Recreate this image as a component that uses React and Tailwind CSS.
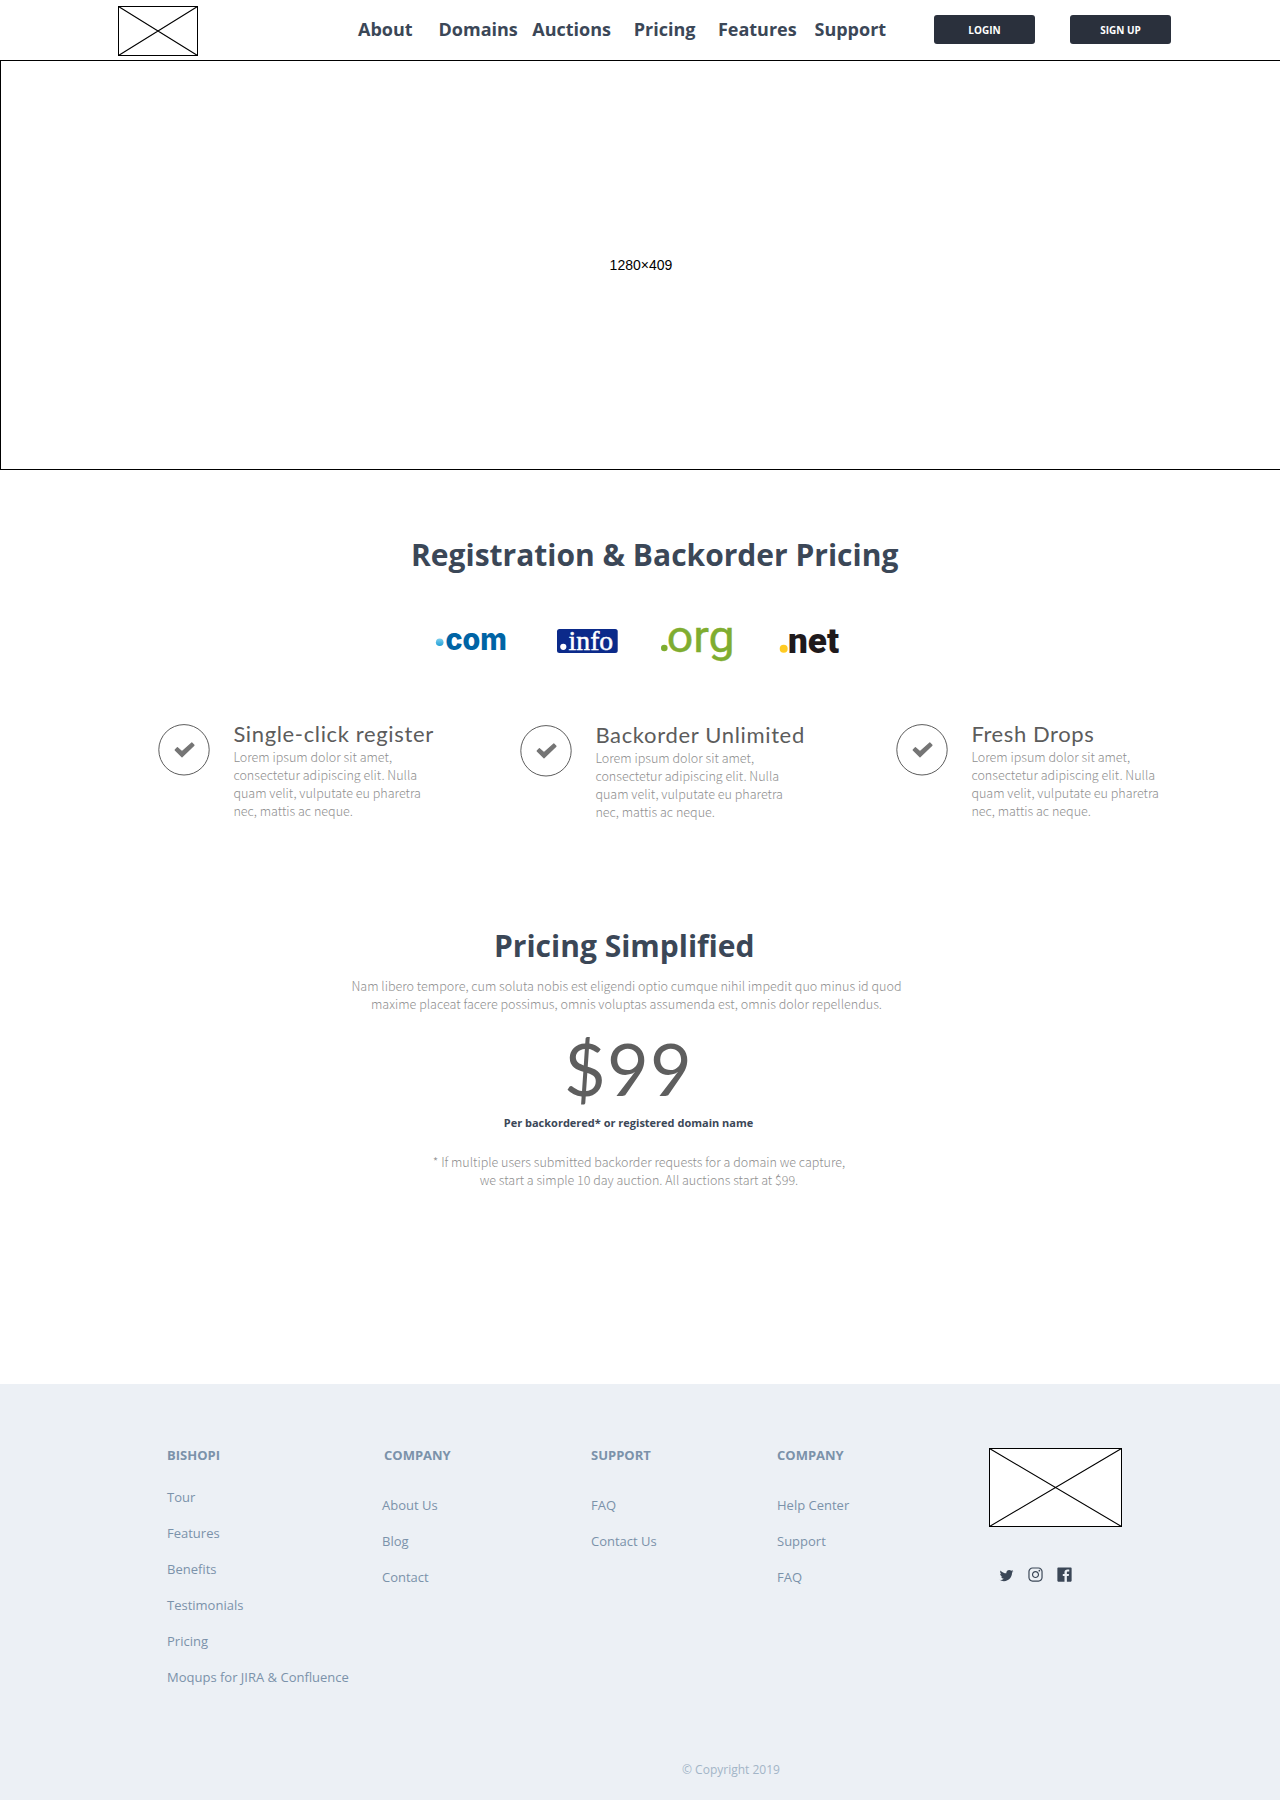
import React from "react";
import { IoLogoTwitter, IoLogoInstagram, IoLogoFacebook } from "react-icons/io";

function ImagePlaceholder({ width, height, className }) {
  return (
    <svg width={width} height={height} className={className} aria-hidden="true">
      <rect x="0.5" y="0.5" width={width - 1} height={height - 1} fill="#fff" stroke="#000" />
      <path d={`M0.5 0.5L${width - 0.5} ${height - 0.5}M${width - 0.5} 0.5L0.5 ${height - 0.5}`} stroke="#000" strokeWidth="1.1" />
    </svg>
  );
}

function Header() {
  return (
    <header className="flex h-[60px] pl-[118px]">
      <ImagePlaceholder width={80} height={50} className="mt-[6px] shrink-0" />
      <nav className="mt-[17px] ml-[160px] flex text-[18px] leading-[24px] font-bold whitespace-nowrap text-[#3b4757]">
        <a className="w-[80.5px]">About</a>
        <a className="w-[93.8px]">Domains</a>
        <a className="w-[101.4px]">Auctions</a>
        <a className="w-[84.2px]">Pricing</a>
        <a className="w-[96.6px]">Features</a>
        <a className="w-[119.5px]">Support</a>
      </nav>
      <div className="mt-[15px] flex gap-[35px] text-[10px] font-bold text-white">
        <button className="h-[29px] w-[101px] rounded-[3px] bg-[#2a303c] pt-px leading-[14px]">LOGIN</button>
        <button className="h-[29px] w-[101px] rounded-[3px] bg-[#2a303c] pt-px leading-[14px]">SIGN UP</button>
      </div>
    </header>
  );
}

function Hero() {
  return (
    <section className="h-[410px] border-y border-l border-black pt-[196px] pl-[608.6px] font-['Liberation_Sans',sans-serif] text-[14px] leading-[16px] text-black">
      1280×409
    </section>
  );
}

function Logos() {
  return (
    <div className="mt-[25px] ml-[435px] flex h-[75px] items-start">
      <svg width="72" height="75" viewBox="0 -20 72 75" className="mr-[50px] overflow-visible" aria-label=".com">
        <defs>
          <linearGradient id="comDot" x1="0" y1="0" x2="0" y2="1">
            <stop offset="0" stopColor="#7fd0ee" />
            <stop offset="1" stopColor="#1f9ed6" />
          </linearGradient>
        </defs>
        <circle cx="4.7" cy="22.3" r="3.8" fill="url(#comDot)" />
        <text x="10.4" y="30.2" textLength="61.5" lengthAdjust="spacingAndGlyphs" className="fill-[#0064a5] font-['Inter',sans-serif] text-[30px] font-extrabold">com</text>
      </svg>
      <svg width="61" height="75" viewBox="0 -20 61 75" className="mr-[42px] overflow-visible" aria-label=".info">
        <rect x="0" y="9" width="60.7" height="24" rx="2.5" fill="#0b2a8a" />
        <circle cx="6.3" cy="26.8" r="3.1" fill="#fff" />
        <text x="11.6" y="30.2" textLength="44.6" lengthAdjust="spacingAndGlyphs" stroke="#fff" strokeWidth="0.5" className="fill-white font-['Liberation_Serif',serif] text-[28px]">info</text>
      </svg>
      <svg width="76" height="75" viewBox="0 -20 76 75" className="mr-[42px] overflow-visible" aria-label=".org">
        <circle cx="4.3" cy="28" r="3.3" fill="#7fad30" />
        <text x="6.7" y="31.5" textLength="68" lengthAdjust="spacingAndGlyphs" stroke="#7fad30" strokeWidth="0.4" className="fill-[#7fad30] font-['Roboto',sans-serif] text-[45px]">org</text>
      </svg>
      <svg width="64" height="75" viewBox="0 -20 64 75" className="overflow-visible" aria-label=".net">
        <circle cx="5.7" cy="28.7" r="4" fill="#ffcb22" />
        <text x="10" y="32.8" textLength="51" lengthAdjust="spacingAndGlyphs" className="fill-[#1f1a1c] font-['Roboto',sans-serif] text-[35.5px] font-black">net</text>
      </svg>
    </div>
  );
}

function Feature({ title, className, titleClass }) {
  return (
    <article className={"flex items-start " + className}>
      <svg width="52" height="52" className="shrink-0" aria-hidden="true">
        <circle cx="26" cy="25.8" r="25.2" fill="none" stroke="#5c5c5c" />
        <path d="M24 27.6L33.8 19L36 21.2L24 32.8L17.2 26L19.4 23.6Z" fill="#757575" stroke="#757575" strokeWidth="1.2" strokeLinejoin="round" />
      </svg>
      <div className="-mt-[4px] ml-[23.4px]">
        <h3 className={"text-[22px] leading-[27px] whitespace-nowrap text-[#5c5c5c] font-['Lato',sans-serif] " + titleClass}>{title}</h3>
        <p className="mt-px w-[200px] text-[12.55px] leading-[18px] font-light text-[#8f8f8f] font-['Noto_Sans_CJK_SC',sans-serif]">
          Lorem ipsum dolor sit amet,
          <br />
          consectetur adipiscing elit. Nulla
          <br />
          quam velit, vulputate eu pharetra
          <br />
          nec, mattis ac neque.
        </p>
      </div>
    </article>
  );
}

function Features() {
  return (
    <div className="mt-[49px] ml-[158px] flex items-start">
      <Feature title="Single-click register" className="w-[362px]" titleClass="tracking-[0.64px]" />
      <Feature title="Backorder Unlimited" className="mt-px w-[376px]" titleClass="tracking-[0.66px]" />
      <Feature title="Fresh Drops" titleClass="tracking-[0.58px]" />
    </div>
  );
}

function Pricing() {
  return (
    <section className="mt-[104px] flex flex-col whitespace-nowrap">
      <h2 className="ml-[494px] text-[30px] leading-[41px] font-bold text-[#3b4757]">Pricing Simplified</h2>
      <p className="mt-[11px] w-[1253px] text-center text-[12.57px] leading-[18px] font-light text-[#8f8f8f] font-['Noto_Sans_CJK_SC',sans-serif]">
        Nam libero tempore, cum soluta nobis est eligendi optio cumque nihil impedit quo minus id quod
        <br />
        maxime placeat facere possimus, omnis voluptas assumenda est, omnis dolor repellendus.
      </p>
      <div className="mt-[12px] ml-[564px] text-[72px] leading-[86px] tracking-[1.2px] text-[#5e5e5e] font-['Lato',sans-serif]">$99</div>
      <strong className="mt-[4px] w-[1257px] text-center text-[11px] leading-[15px] font-bold text-[#3b4757]">Per backordered* or registered domain name</strong>
      <p className="mt-[23px] w-[1278px] text-center text-[12.53px] leading-[18px] font-light text-[#8f8f8f] font-['Noto_Sans_CJK_SC',sans-serif]">
        * If multiple users submitted backorder requests for a domain we capture,
        <br />
        we start a simple 10 day auction. All auctions start at $99.
      </p>
    </section>
  );
}

function FooterColumn({ title, links, className, titleClass, listClass }) {
  return (
    <div className={"whitespace-nowrap " + className}>
      <h4 className={"text-[13px] leading-[18px] font-bold " + titleClass}>{title}</h4>
      <ul className={"flex flex-col gap-[18px] text-[13px] leading-[18px] " + listClass}>
        {links.map((link) => (
          <li key={link}>{link}</li>
        ))}
      </ul>
    </div>
  );
}

function Footer() {
  return (
    <footer className="h-[416px] bg-[#ecf0f5] text-[#7b92aa]">
      <div className="flex h-[376px] items-start pt-[62px] pl-[167px]">
        <FooterColumn
          title="BISHOPI"
          links={["Tour", "Features", "Benefits", "Testimonials", "Pricing", "Moqups for JIRA & Confluence"]}
          className="w-[215px]"
          titleClass=""
          listClass="mt-[24px]"
        />
        <FooterColumn title="COMPANY" links={["About Us", "Blog", "Contact"]} className="w-[209px]" titleClass="pl-[2px]" listClass="mt-[32px]" />
        <FooterColumn title="SUPPORT" links={["FAQ", "Contact Us"]} className="w-[186px]" titleClass="" listClass="mt-[32px]" />
        <FooterColumn title="COMPANY" links={["Help Center", "Support", "FAQ"]} className="w-[212px]" titleClass="" listClass="mt-[32px]" />
        <div className="mt-[2px]">
          <ImagePlaceholder width={133} height={79} className="block" />
          <div className="mt-[37px] ml-[7px] flex gap-[9.4px] text-[#3b4757]">
            <span className="flex size-[20px] items-center justify-center pt-[2px]"><IoLogoTwitter size={15} /></span>
            <span className="flex size-[20px] items-center justify-center"><IoLogoInstagram size={19} /></span>
            <span className="flex size-[20px] items-center justify-center"><IoLogoFacebook size={19} /></span>
          </div>
        </div>
      </div>
      <p className="pt-px pl-[682px] text-[12px] leading-[17px] text-[#a3b5c7]">© Copyright 2019</p>
    </footer>
  );
}

export default function App() {
  return (
    <div className="flex h-[1800px] w-[1280px] flex-col overflow-hidden bg-white font-['Open_Sans',sans-serif]">
      <Header />
      <Hero />
      <h2 className="mt-[64px] ml-[411px] text-[30px] leading-[41px] font-bold text-[#3b4757]">Registration &amp; Backorder Pricing</h2>
      <Logos />
      <Features />
      <Pricing />
      <div className="mt-auto">
        <Footer />
      </div>
    </div>
  );
}
